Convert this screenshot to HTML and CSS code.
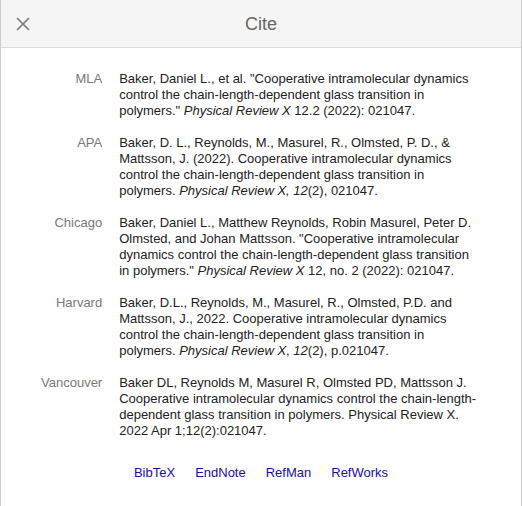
FILE: index.html
```html
<!DOCTYPE html>
<html>
<head>
<meta charset="utf-8">
<title>Cite</title>
<link rel="stylesheet" href="styles.css">
</head>
<body>
<div class="dialog">
  <div class="hdr">
    <button class="close" aria-label="Close">
      <svg width="14" height="14" viewBox="0 0 14 14"><path d="M1 1L13 13M13 1L1 13" stroke="#777" stroke-width="1.6" fill="none"/></svg>
    </button>
    <div class="title">Cite</div>
  </div>
  <div class="content">
    <table class="cit">
      <tr><th>MLA</th><td>Baker, Daniel L., et al. "Cooperative intramolecular dynamics control the chain-length-dependent glass transition in polymers." <i>Physical Review X</i> 12.2 (2022): 021047.</td></tr>
      <tr><th>APA</th><td>Baker, D. L., Reynolds, M., Masurel, R., Olmsted, P. D., &amp; Mattsson, J. (2022). Cooperative intramolecular dynamics control the chain-length-dependent glass transition in polymers. <i>Physical Review X, 12</i>(2), 021047.</td></tr>
      <tr><th>Chicago</th><td>Baker, Daniel L., Matthew Reynolds, Robin Masurel, Peter D. Olmsted, and Johan Mattsson. "Cooperative intramolecular dynamics control the chain-length-dependent glass transition in polymers." <i>Physical Review X</i> 12, no. 2 (2022): 021047.</td></tr>
      <tr><th>Harvard</th><td>Baker, D.L., Reynolds, M., Masurel, R., Olmsted, P.D. and Mattsson, J., 2022. Cooperative intramolecular dynamics control the chain-length-dependent glass transition in polymers. <i>Physical Review X</i>, <i>12</i>(2), p.021047.</td></tr>
      <tr><th>Vancouver</th><td>Baker DL, Reynolds M, Masurel R, Olmsted PD, Mattsson J. Cooperative intramolecular dynamics control the chain-length-dependent glass transition in polymers. Physical Review X. 2022 Apr 1;12(2):021047.</td></tr>
    </table>
    <div class="links">
      <a href="#">BibTeX</a>
      <a href="#">EndNote</a>
      <a href="#">RefMan</a>
      <a href="#">RefWorks</a>
    </div>
  </div>
</div>
</body>
</html>
```

FILE: styles.css
```css
html, body {
  margin: 0;
  padding: 0;
  background: #fff;
}
body {
  font-family: Arial, "Liberation Sans", sans-serif;
  font-size: 13px;
  color: #222;
}
.dialog {
  width: 522px;
  height: 506px;
  box-sizing: border-box;
  border-left: 1px solid #ccc;
  border-right: 1px solid #ccc;
}
.hdr {
  height: 47px;
  background: #f5f5f5;
  border-bottom: 1px solid #d9d9d9;
  display: flex;
  align-items: center;
  position: relative;
}
.close {
  position: absolute;
  left: 14px;
  top: 16px;
  width: 16px;
  height: 16px;
  padding: 0;
  border: 0;
  background: none;
  display: flex;
  align-items: center;
  justify-content: center;
}
.title {
  flex: 1;
  text-align: center;
  font-size: 18px;
  color: #666;
  line-height: 24px;
}
.content {
  padding: 15px 40px 0 40px;
}
.cit {
  border-collapse: collapse;
  width: 100%;
}
.cit th, .cit td {
  vertical-align: top;
  padding: 8px 0;
  line-height: 16px;
}
.cit th {
  text-align: right;
  font-weight: normal;
  color: #777;
  padding-right: 17px;
  white-space: nowrap;
  width: 1px;
}
.links {
  margin-top: 18px;
  display: flex;
  justify-content: center;
  gap: 20px;
  line-height: 16px;
}
.links a {
  color: #1a0dab;
  text-decoration: none;
}
```
